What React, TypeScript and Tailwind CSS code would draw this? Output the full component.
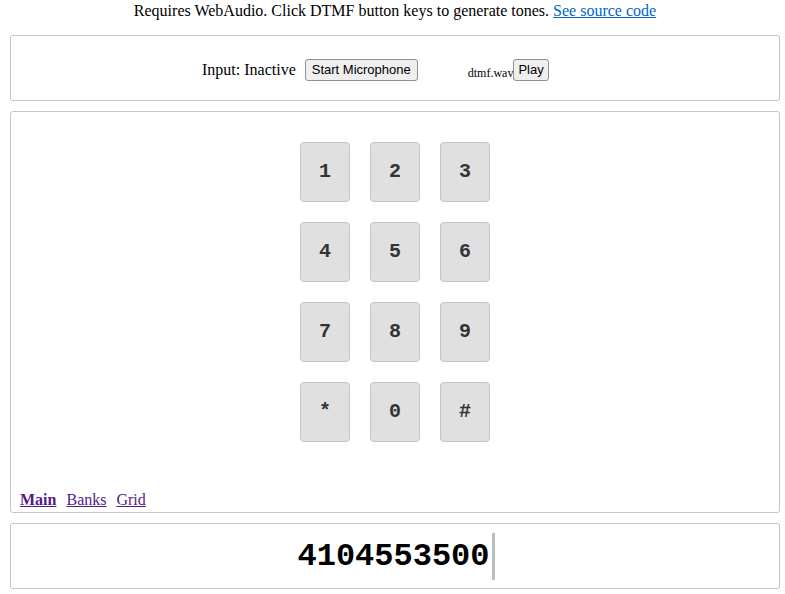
import React from 'react'

const keys = ['1', '2', '3', '4', '5', '6', '7', '8', '9', '*', '0', '#']

const App: React.FC = () => {
  return (
    <div className="font-['Liberation_Serif',serif] text-black bg-white min-h-[594px]">
      <div className="h-[35px] pt-[2px] pl-[5px] text-center text-[16px] leading-[18px]">
        Requires WebAudio. Click DTMF button keys to generate tones.{' '}
        <a href="#" className="text-[#0066cc] underline">See source code</a>
      </div>

      <div className="ml-[10px] w-[770px] h-[66px] border border-[#c4c4c4] rounded-[3px] flex items-center pt-[4px] pl-[191px]">
        <span className="text-[16px] leading-[18px]">Input: Inactive</span>
        <button className="ml-[9px] h-[22px] px-[6px] bg-[#efefef] border border-[#8f8f8f] rounded-[3px] font-['Liberation_Sans',sans-serif] text-[13px] leading-[16px]">
          Start Microphone
        </button>
        <span className="ml-[50px] mt-[6px] text-[12px] leading-[16px]">dtmf.wav</span>
        <button className="h-[22px] px-[4px] bg-[#efefef] border border-[#8f8f8f] rounded-[3px] font-['Liberation_Sans',sans-serif] text-[13px] leading-[16px]">
          Play
        </button>
      </div>

      <div className="ml-[10px] mt-[10px] w-[770px] h-[402px] border border-[#c4c4c4] rounded-[3px] flex flex-col">
        <div className="mt-[30px] mx-auto grid grid-cols-[50px_50px_50px] gap-[20px]">
          {keys.map((k) => (
            <button
              key={k}
              className="w-[50px] h-[60px] bg-[#e0e0e0] border border-[#c4c4c4] rounded-[4px] text-[#333] font-['Liberation_Mono',monospace] font-bold text-[20px] leading-none"
            >
              {k}
            </button>
          ))}
        </div>
        <div className="mt-auto pl-[9px] pb-[3px] flex gap-[10px] text-[16px] leading-[18px] text-[#551a8b]">
          <a href="#" className="underline font-bold">Main</a>
          <a href="#" className="underline">Banks</a>
          <a href="#" className="underline">Grid</a>
        </div>
      </div>

      <div className="ml-[10px] mt-[10px] w-[770px] h-[66px] border border-[#c4c4c4] rounded-[3px] flex items-center justify-center pl-[2px]">
        <span className="font-['Liberation_Mono',monospace] font-bold text-[32px] leading-[47px] pr-[2px] border-r-[3px] border-[#bdbdbd]">
          4104553500
        </span>
      </div>
    </div>
  )
}

export default App
